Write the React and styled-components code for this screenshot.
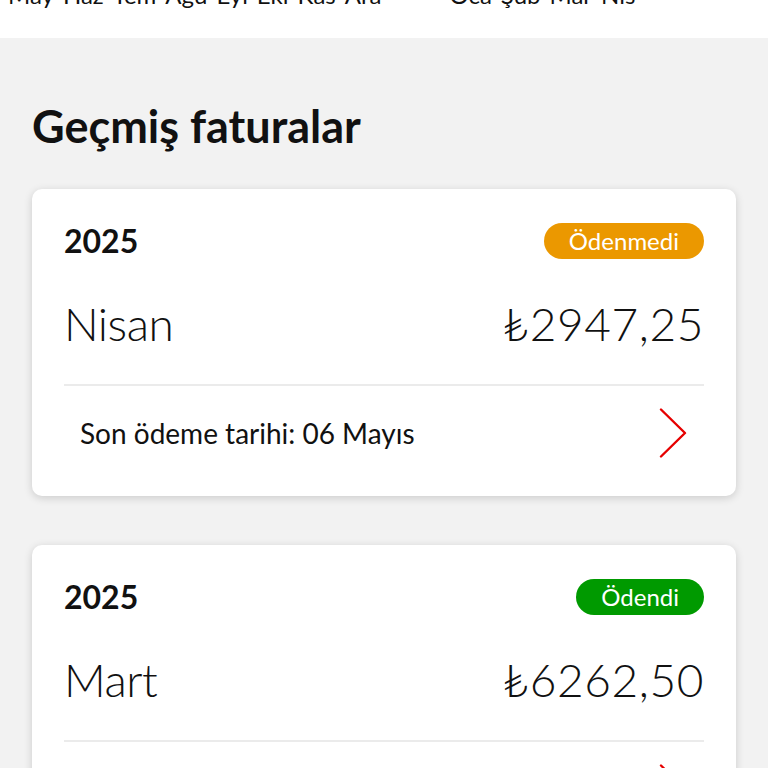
import React from 'react'
import styled, { createGlobalStyle } from 'styled-components'

const GlobalStyle = createGlobalStyle`
  body {
    margin: 0;
    background: #f2f2f2;
    font-family: Lato, "Noto Sans", sans-serif;
    color: #111;
  }
`

const months = [
  ['May', 'Haz', 'Tem', 'Ağu', 'Eyl', 'Eki', 'Kas', 'Ara'],
  ['Oca', 'Şub', 'Mar', 'Nis'],
]

const bills = [
  { year: '2025', month: 'Nisan', amount: '₺2947,25', paid: false, due: 'Son ödeme tarihi: 06 Mayıs' },
  { year: '2025', month: 'Mart', amount: '₺6262,50', paid: true, due: 'Son ödeme tarihi: 06 Nisan' },
]

const Chevron = () => (
  <svg width="28" height="50" viewBox="0 0 28 50" fill="none">
    <polyline points="2,1.5 26,25 2,48.5" stroke="#e60000" strokeWidth="2.4" strokeLinecap="round" strokeLinejoin="round" />
  </svg>
)

const App = () => {
  return (
    <Page>
      <GlobalStyle />
      <MonthBand>
        <MonthRow>
          {months.map((group, idx) => (
            <MonthGroup key={idx}>
              {group.map((m) => <span key={m}>{m}</span>)}
            </MonthGroup>
          ))}
        </MonthRow>
      </MonthBand>

      <Main>
        <Title>Geçmiş faturalar</Title>
        <CardList>
          {bills.map((bill, idx) => (
            <Card key={idx}>
              <TopRow>
                <Year>{bill.year}</Year>
                <Badge $paid={bill.paid}>{bill.paid ? 'Ödendi' : 'Ödenmedi'}</Badge>
              </TopRow>
              <AmountRow>
                <span>{bill.month}</span>
                <Amount>{bill.amount}</Amount>
              </AmountRow>
              <Divider />
              <DueRow>
                <span>{bill.due}</span>
                <Chevron />
              </DueRow>
            </Card>
          ))}
        </CardList>
      </Main>
    </Page>
  )
}

const Page = styled.div`
  min-height: 768px;
`

const MonthBand = styled.header`
  height: 38px;
  background: #fff;
  overflow: hidden;
  padding-left: 8px;
`

const MonthRow = styled.div`
  display: flex;
  gap: 68px;
  margin-top: -20px;
  font-size: 24px;
  line-height: 30px;
`

const MonthGroup = styled.div`
  display: flex;
  gap: 9px;
`

const Main = styled.main`
  padding: 0 32px 40px;
`

const Title = styled.h1`
  margin: 62px 0 36px;
  font-size: 45px;
  line-height: 53px;
  font-weight: 700;
`

const CardList = styled.div`
  display: flex;
  flex-direction: column;
  gap: 49px;
`

const Card = styled.section`
  background: #fff;
  border-radius: 10px;
  box-shadow: 0 2px 8px rgba(0, 0, 0, 0.16);
  padding: 32px 32px 16px;
`

const TopRow = styled.div`
  display: flex;
  justify-content: space-between;
  align-items: center;
`

const Year = styled.span`
  font-size: 32px;
  font-weight: 700;
`

const Badge = styled.span`
  height: 36px;
  line-height: 36px;
  padding: 0 25px;
  border-radius: 18px;
  font-size: 24px;
  color: #fff;
  background: ${({ $paid }) => ($paid ? '#009a00' : '#eb9800')};
`

const AmountRow = styled.div`
  display: flex;
  justify-content: space-between;
  align-items: baseline;
  margin-top: 36px;
  font-size: 46px;
  line-height: 56px;
  font-weight: 300;
  letter-spacing: -0.5px;
`

const Amount = styled.span`
  letter-spacing: 0.6px;
`

const Divider = styled.hr`
  border: none;
  border-top: 2px solid #ebebeb;
  margin: 32px 0 0;
`

const DueRow = styled.div`
  display: flex;
  justify-content: space-between;
  align-items: center;
  height: 94px;
  padding: 0 17px 0 16px;
  font-size: 28px;
`

export default App
